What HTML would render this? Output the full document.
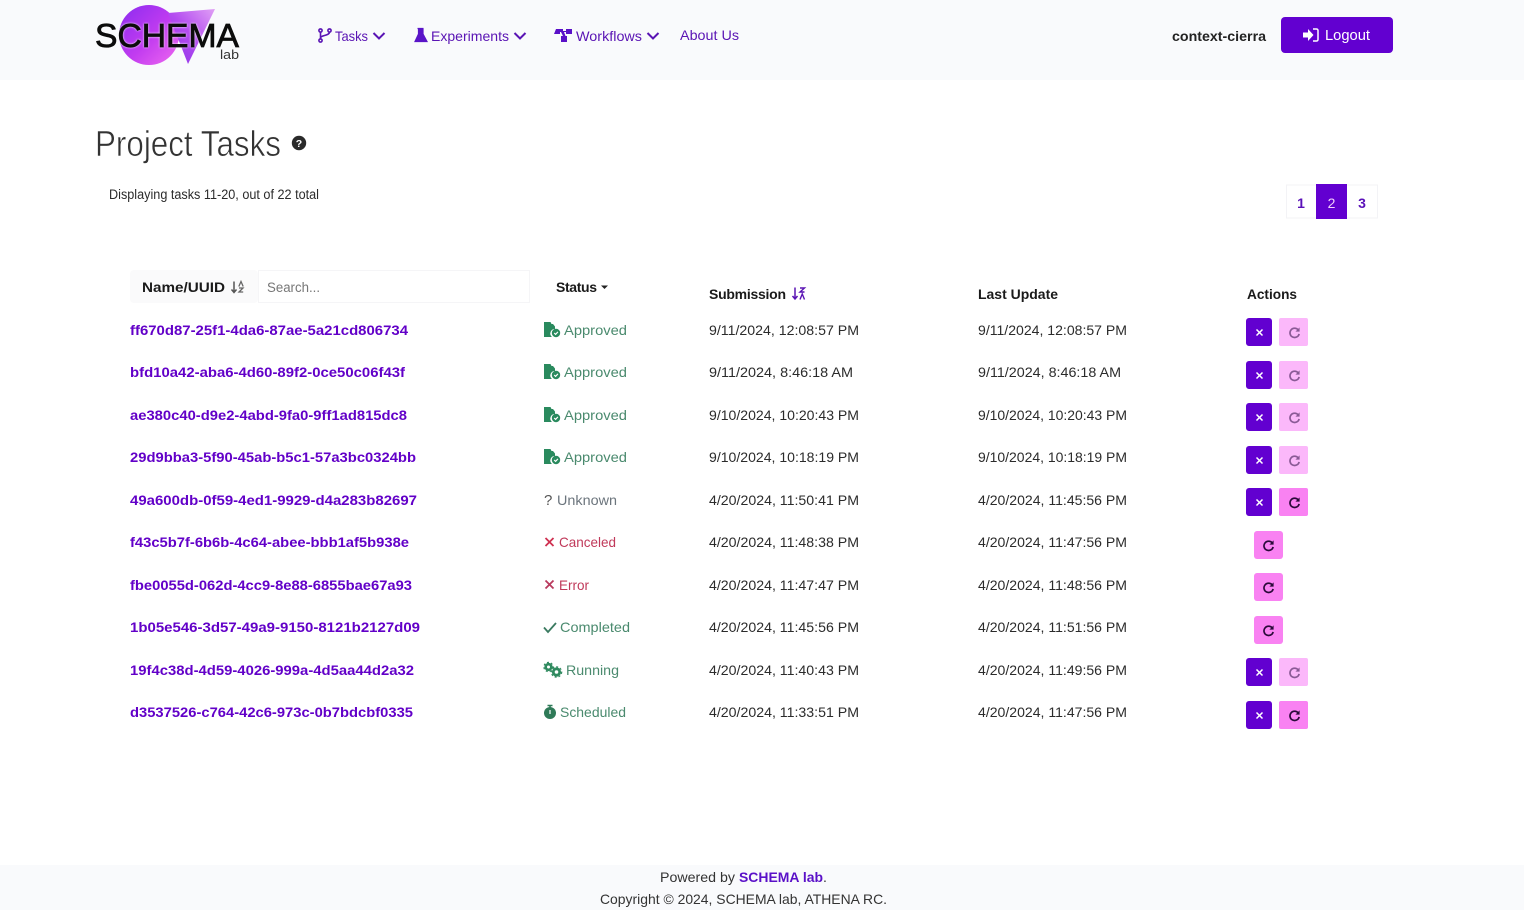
<!DOCTYPE html>
<html lang="en">
<head>
<meta charset="utf-8">
<title>Project Tasks</title>
<style>
html,body{margin:0;padding:0;background:#fff;width:1524px;height:910px;overflow:hidden}
svg{display:block}
text{font-family:"Liberation Sans",Arial,sans-serif}
.nav{font-size:14px;fill:#5a14b4}
.id{font-size:14px;font-weight:bold;fill:#6200c8}
.d{font-size:14px;fill:#2b2b2b}
.h{font-size:14px;font-weight:bold;fill:#1a1a1a}
.ok{font-size:14px;fill:#4a8a6e}
.bad{font-size:14px;fill:#c0395a}
.unk{font-size:14px;fill:#6c757d}
.f{font-size:14px;fill:#333}
</style>
</head>
<body>
<svg width="1524" height="910" viewBox="0 0 1524 910" xmlns="http://www.w3.org/2000/svg">
<defs>
<linearGradient id="g1" x1="0" y1="0" x2="1" y2="1"><stop offset="0" stop-color="#8a2bf0"/><stop offset=".55" stop-color="#c23cf0"/><stop offset="1" stop-color="#f06af0"/></linearGradient>
<linearGradient id="g2" x1="1" y1="0" x2="0" y2="1"><stop offset="0" stop-color="#e0a0f5"/><stop offset=".5" stop-color="#b44cf0"/><stop offset="1" stop-color="#8a30e8"/></linearGradient>
<symbol id="appr" viewBox="0 0 16 16" overflow="visible">
<path d="M0 0h6.500l1 2h1.500l2 2.500V7a4.500 4.500 0 0 0-3 8H0z" fill="#2a8a5e"/>
<circle cx="12" cy="11" r="4.200" fill="#2a8a5e"/>
<path d="M10.200 11l1.400 1.400 2.300-2.500" fill="none" stroke="#fff" stroke-width="1.200"/>
</symbol>
<symbol id="x" viewBox="0 0 12 12"><path d="M2 2l8 8M10 2l-8 8" fill="none" stroke="currentColor" stroke-width="2"/></symbol>
<symbol id="redo" viewBox="0 0 14 14"><path d="M11 4.200A5 5 0 1 0 12 8.500" fill="none" stroke="currentColor" stroke-width="1.800"/><path d="M12.500 1.500v4.500H8z" fill="currentColor"/></symbol>
<symbol id="chev" viewBox="0 0 14 10"><path d="M1.500 2l5.500 5.500L12.500 2" fill="none" stroke="#5a14b4" stroke-width="2"/></symbol>
</defs>

<rect width="1524" height="80" fill="#f9fafc"/>
<rect y="865" width="1524" height="45" fill="#f9fafc"/>

<!-- logo -->
<circle cx="149" cy="35" r="30" fill="url(#g1)"/>
<path d="M168 13L215 9 188 64z" fill="url(#g2)"/>
<text x="95" y="47" font-size="33" textLength="144" lengthAdjust="spacingAndGlyphs" fill="#0c0c0c" stroke="#0c0c0c" stroke-width=".8" style="filter:drop-shadow(0 0 1px #fff)">SCHEMA</text>
<text x="220" y="59" font-size="13" textLength="19" lengthAdjust="spacingAndGlyphs" fill="#333">lab</text>

<!-- nav -->
<g fill="none" stroke="#5a14b4" stroke-width="1.600"><circle cx="320.500" cy="30.500" r="1.600"/><circle cx="320.500" cy="40.500" r="1.600"/><circle cx="329.500" cy="30.500" r="1.600"/><path d="M320.500 32v7M329.500 32c0 4-9 3-9 6"/></g>
<text class="nav" x="335" y="41" textLength="33" lengthAdjust="spacingAndGlyphs">Tasks</text>
<use href="#chev" x="372" y="31" width="14" height="10"/>
<path d="M417.500 28.500h6M418.500 29v5l-3.500 7.500h12L423 34v-5z" fill="#5a14c8" stroke="#5a14c8" stroke-width="1.200"/>
<text class="nav" x="431" y="41" textLength="78" lengthAdjust="spacingAndGlyphs">Experiments</text>
<use href="#chev" x="513" y="31" width="14" height="10"/>
<path d="M556 29h7v2h3v-2h6v5h-6v-2h-2l1.500 4h1.500v6h-6v-6h2l-2-4h-1v2h-6z" fill="#5a10c8"/>
<text class="nav" x="576" y="41" textLength="66" lengthAdjust="spacingAndGlyphs">Workflows</text>
<use href="#chev" x="646" y="31" width="14" height="10"/>
<text class="nav" x="680" y="40" textLength="59" lengthAdjust="spacingAndGlyphs">About Us</text>

<text x="1172" y="41" font-size="14" font-weight="bold" fill="#222" textLength="94" lengthAdjust="spacingAndGlyphs">context-cierra</text>
<rect x="1281" y="17" width="112" height="36" rx="4" fill="#6200d0"/>
<path d="M1303 32.500h5V29l5.500 6-5.500 6v-3.500h-5z" fill="#fff"/>
<path d="M1313 29h3.500a1.500 1.500 0 0 1 1.500 1.500v9a1.500 1.500 0 0 1-1.500 1.500H1313" fill="none" stroke="#fff" stroke-width="1.500"/>
<text x="1325" y="40" font-size="14.500" fill="#fff" textLength="45" lengthAdjust="spacingAndGlyphs">Logout</text>

<!-- title -->
<text x="95" y="156" font-size="36" fill="#333" stroke="#fff" stroke-width=".6" textLength="186" lengthAdjust="spacingAndGlyphs">Project Tasks</text>
<circle cx="299" cy="143" r="7.200" fill="#2a2a2a"/>
<text x="299" y="147" font-size="10.500" font-weight="bold" fill="#fff" text-anchor="middle">?</text>
<text x="109" y="199" font-size="13.500" fill="#2b2b2b" textLength="210" lengthAdjust="spacingAndGlyphs">Displaying tasks 11-20, out of 22 total</text>

<!-- pagination -->
<rect x="1286.500" y="185" width="91" height="33" fill="#fff" stroke="#f3f3f6"/>
<rect x="1316" y="184" width="31" height="35" fill="#6200d0"/>
<text x="1301" y="208" font-size="14" font-weight="bold" fill="#5a10b8" text-anchor="middle">1</text>
<text x="1331.500" y="208" font-size="14" fill="#f3d0fb" text-anchor="middle">2</text>
<text x="1362" y="208" font-size="14" font-weight="bold" fill="#5a10b8" text-anchor="middle">3</text>

<!-- table head -->
<rect x="130" y="270" width="128" height="33" rx="4" fill="#fafafb"/>
<rect x="258.500" y="270.500" width="271" height="32" fill="#fff" stroke="#f5f5f7"/>
<text class="h" x="142" y="292" textLength="83" lengthAdjust="spacingAndGlyphs" fill="#333">Name/UUID</text>
<path d="M234 281.500v11M231.500 289.500l2.500 3 2.500-3" fill="none" stroke="#555" stroke-width="1.500"/>
<path d="M238.800 286.500l2.200-5 2.200 5M239 288h4l-4 4h4.200" stroke="#666" stroke-width="1.300" fill="none"/>
<text x="267" y="292" font-size="13.500" fill="#777" textLength="53" lengthAdjust="spacingAndGlyphs">Search...</text>
<text class="h" x="556" y="292" textLength="41">Status</text>
<path d="M601 285.500h7l-3.500 3.500z" fill="#222"/>
<text class="h" x="709" y="299" textLength="77">Submission</text>
<path d="M795 287.500v11.500M792.500 296l2.500 3 2.500-3" fill="none" stroke="#5a14b4" stroke-width="1.500"/>
<path d="M800 288h4.500l-4.500 4h4.500M800 299.500l2.250-5.500 2.250 5.500" fill="none" stroke="#5a14b4" stroke-width="1.400"/>
<text class="h" x="978" y="299" textLength="80" lengthAdjust="spacingAndGlyphs">Last Update</text>
<text class="h" x="1247" y="299" textLength="50" lengthAdjust="spacingAndGlyphs">Actions</text>

<!-- ids -->
<text class="id" x="130" y="335" textLength="278" lengthAdjust="spacingAndGlyphs">ff670d87-25f1-4da6-87ae-5a21cd806734</text>
<text class="id" x="130" y="377" textLength="275" lengthAdjust="spacingAndGlyphs">bfd10a42-aba6-4d60-89f2-0ce50c06f43f</text>
<text class="id" x="130" y="420" textLength="277" lengthAdjust="spacingAndGlyphs">ae380c40-d9e2-4abd-9fa0-9ff1ad815dc8</text>
<text class="id" x="130" y="462" textLength="286" lengthAdjust="spacingAndGlyphs">29d9bba3-5f90-45ab-b5c1-57a3bc0324bb</text>
<text class="id" x="130" y="505" textLength="287" lengthAdjust="spacingAndGlyphs">49a600db-0f59-4ed1-9929-d4a283b82697</text>
<text class="id" x="130" y="547" textLength="279" lengthAdjust="spacingAndGlyphs">f43c5b7f-6b6b-4c64-abee-bbb1af5b938e</text>
<text class="id" x="130" y="590" textLength="282" lengthAdjust="spacingAndGlyphs">fbe0055d-062d-4cc9-8e88-6855bae67a93</text>
<text class="id" x="130" y="632" textLength="290" lengthAdjust="spacingAndGlyphs">1b05e546-3d57-49a9-9150-8121b2127d09</text>
<text class="id" x="130" y="675" textLength="284" lengthAdjust="spacingAndGlyphs">19f4c38d-4d59-4026-999a-4d5aa44d2a32</text>
<text class="id" x="130" y="717" textLength="283" lengthAdjust="spacingAndGlyphs">d3537526-c764-42c6-973c-0b7bdcbf0335</text>

<!-- status -->
<use href="#appr" x="544" y="322" width="16" height="16"/>
<text class="ok" x="564" y="335" textLength="63" lengthAdjust="spacingAndGlyphs">Approved</text>
<use href="#appr" x="544" y="364" width="16" height="16"/>
<text class="ok" x="564" y="377" textLength="63" lengthAdjust="spacingAndGlyphs">Approved</text>
<use href="#appr" x="544" y="407" width="16" height="16"/>
<text class="ok" x="564" y="420" textLength="63" lengthAdjust="spacingAndGlyphs">Approved</text>
<use href="#appr" x="544" y="449" width="16" height="16"/>
<text class="ok" x="564" y="462" textLength="63" lengthAdjust="spacingAndGlyphs">Approved</text>
<text x="544" y="505" font-size="15" fill="#555">?</text>
<text class="unk" x="557" y="505" textLength="60" lengthAdjust="spacingAndGlyphs">Unknown</text>
<path d="M545.500 538l8 8M553.500 538l-8 8" stroke="#cf3050" stroke-width="1.800" fill="none"/>
<text class="bad" x="559" y="547" textLength="57" lengthAdjust="spacingAndGlyphs">Canceled</text>
<path d="M545.500 580.500l8 8M553.500 580.500l-8 8" stroke="#b93a5e" stroke-width="1.800" fill="none"/>
<text class="bad" x="559" y="590" textLength="30" lengthAdjust="spacingAndGlyphs">Error</text>
<path d="M544 627.500l4 4.500 8-9" stroke="#3a7a60" stroke-width="1.800" fill="none"/>
<text class="ok" x="560" y="632" textLength="70" lengthAdjust="spacingAndGlyphs">Completed</text>
<circle cx="548.500" cy="667" r="2.800" fill="none" stroke="#2f8a5f" stroke-width="2.600"/>
<circle cx="548.500" cy="667" r="4.600" fill="none" stroke="#2f8a5f" stroke-width="1.200" stroke-dasharray="2 2"/>
<circle cx="556.500" cy="672" r="3.200" fill="none" stroke="#2f8a5f" stroke-width="2.800"/>
<circle cx="556.500" cy="672" r="5.200" fill="none" stroke="#2f8a5f" stroke-width="1.200" stroke-dasharray="2 2"/>
<text class="ok" x="566" y="675" textLength="53" lengthAdjust="spacingAndGlyphs">Running</text>
<circle cx="550" cy="713" r="6" fill="#2f7a58"/>
<path d="M547.500 705.500h5M550 706v2" stroke="#2f7a58" stroke-width="1.600"/>
<path d="M550 710v4" stroke="#fff" stroke-width="1.200"/>
<text class="ok" x="560" y="717" textLength="66" lengthAdjust="spacingAndGlyphs">Scheduled</text>

<!-- dates -->
<text class="d" x="709" y="335" textLength="150" lengthAdjust="spacingAndGlyphs">9/11/2024, 12:08:57 PM</text>
<text class="d" x="978" y="335" textLength="149" lengthAdjust="spacingAndGlyphs">9/11/2024, 12:08:57 PM</text>
<text class="d" x="709" y="377" textLength="144" lengthAdjust="spacingAndGlyphs">9/11/2024, 8:46:18 AM</text>
<text class="d" x="978" y="377" textLength="143" lengthAdjust="spacingAndGlyphs">9/11/2024, 8:46:18 AM</text>
<text class="d" x="709" y="420" textLength="150" lengthAdjust="spacingAndGlyphs">9/10/2024, 10:20:43 PM</text>
<text class="d" x="978" y="420" textLength="149" lengthAdjust="spacingAndGlyphs">9/10/2024, 10:20:43 PM</text>
<text class="d" x="709" y="462" textLength="150" lengthAdjust="spacingAndGlyphs">9/10/2024, 10:18:19 PM</text>
<text class="d" x="978" y="462" textLength="149" lengthAdjust="spacingAndGlyphs">9/10/2024, 10:18:19 PM</text>
<text class="d" x="709" y="505" textLength="150" lengthAdjust="spacingAndGlyphs">4/20/2024, 11:50:41 PM</text>
<text class="d" x="978" y="505" textLength="149" lengthAdjust="spacingAndGlyphs">4/20/2024, 11:45:56 PM</text>
<text class="d" x="709" y="547" textLength="150" lengthAdjust="spacingAndGlyphs">4/20/2024, 11:48:38 PM</text>
<text class="d" x="978" y="547" textLength="149" lengthAdjust="spacingAndGlyphs">4/20/2024, 11:47:56 PM</text>
<text class="d" x="709" y="590" textLength="150" lengthAdjust="spacingAndGlyphs">4/20/2024, 11:47:47 PM</text>
<text class="d" x="978" y="590" textLength="149" lengthAdjust="spacingAndGlyphs">4/20/2024, 11:48:56 PM</text>
<text class="d" x="709" y="632" textLength="150" lengthAdjust="spacingAndGlyphs">4/20/2024, 11:45:56 PM</text>
<text class="d" x="978" y="632" textLength="149" lengthAdjust="spacingAndGlyphs">4/20/2024, 11:51:56 PM</text>
<text class="d" x="709" y="675" textLength="150" lengthAdjust="spacingAndGlyphs">4/20/2024, 11:40:43 PM</text>
<text class="d" x="978" y="675" textLength="149" lengthAdjust="spacingAndGlyphs">4/20/2024, 11:49:56 PM</text>
<text class="d" x="709" y="717" textLength="150" lengthAdjust="spacingAndGlyphs">4/20/2024, 11:33:51 PM</text>
<text class="d" x="978" y="717" textLength="149" lengthAdjust="spacingAndGlyphs">4/20/2024, 11:47:56 PM</text>

<!-- actions -->
<g>
<rect x="1246" y="318" width="26" height="28" rx="3" fill="#6200d0"/><use href="#x" x="1255" y="328" width="9" height="9" color="#fff"/>
<rect x="1279" y="318" width="29" height="28" rx="2" fill="#fbb8fa"/><use href="#redo" x="1288" y="326" width="13" height="13" color="#8a5a96"/>
<rect x="1246" y="361" width="26" height="28" rx="3" fill="#6200d0"/><use href="#x" x="1255" y="371" width="9" height="9" color="#fff"/>
<rect x="1279" y="361" width="29" height="28" rx="2" fill="#fbb8fa"/><use href="#redo" x="1288" y="369" width="13" height="13" color="#8a5a96"/>
<rect x="1246" y="403" width="26" height="28" rx="3" fill="#6200d0"/><use href="#x" x="1255" y="413" width="9" height="9" color="#fff"/>
<rect x="1279" y="403" width="29" height="28" rx="2" fill="#fbb8fa"/><use href="#redo" x="1288" y="411" width="13" height="13" color="#8a5a96"/>
<rect x="1246" y="446" width="26" height="28" rx="3" fill="#6200d0"/><use href="#x" x="1255" y="456" width="9" height="9" color="#fff"/>
<rect x="1279" y="446" width="29" height="28" rx="2" fill="#fbb8fa"/><use href="#redo" x="1288" y="454" width="13" height="13" color="#8a5a96"/>
<rect x="1246" y="488" width="26" height="28" rx="3" fill="#6200d0"/><use href="#x" x="1255" y="498" width="9" height="9" color="#fff"/>
<rect x="1279" y="488" width="29" height="28" rx="2" fill="#f982f2"/><use href="#redo" x="1288" y="496" width="13" height="13" color="#2a0a3a"/>
<rect x="1254" y="531" width="29" height="28" rx="3" fill="#f982f2"/><use href="#redo" x="1262" y="539" width="13" height="13" color="#2a0a3a"/>
<rect x="1254" y="573" width="29" height="28" rx="3" fill="#f982f2"/><use href="#redo" x="1262" y="581" width="13" height="13" color="#2a0a3a"/>
<rect x="1254" y="616" width="29" height="28" rx="3" fill="#f982f2"/><use href="#redo" x="1262" y="624" width="13" height="13" color="#2a0a3a"/>
<rect x="1246" y="658" width="26" height="28" rx="3" fill="#6200d0"/><use href="#x" x="1255" y="668" width="9" height="9" color="#fff"/>
<rect x="1279" y="658" width="29" height="28" rx="2" fill="#fbb8fa"/><use href="#redo" x="1288" y="666" width="13" height="13" color="#8a5a96"/>
<rect x="1246" y="701" width="26" height="28" rx="3" fill="#6200d0"/><use href="#x" x="1255" y="711" width="9" height="9" color="#fff"/>
<rect x="1279" y="701" width="29" height="28" rx="2" fill="#f982f2"/><use href="#redo" x="1288" y="709" width="13" height="13" color="#2a0a3a"/>
</g>

<!-- footer -->
<text class="f" x="660" y="882" textLength="75" lengthAdjust="spacingAndGlyphs">Powered by</text>
<text x="739" y="882" font-size="14" font-weight="bold" fill="#5a10c8" textLength="84" lengthAdjust="spacingAndGlyphs">SCHEMA lab</text>
<text class="f" x="823" y="882">.</text>
<text class="f" x="600" y="904" textLength="287" lengthAdjust="spacingAndGlyphs">Copyright © 2024, SCHEMA lab, ATHENA RC.</text>
</svg>
</body>
</html>
